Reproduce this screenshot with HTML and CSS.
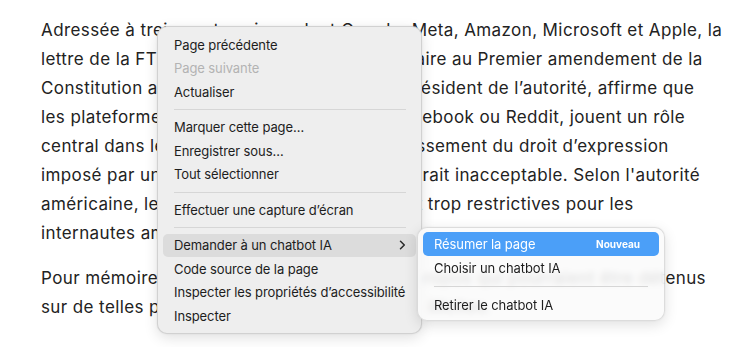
FILE: index.html
```html
<!DOCTYPE html>
<html lang="fr">
<head>
<meta charset="utf-8">
<title>Menu contextuel</title>
<link rel="stylesheet" href="styles.css">
</head>
<body>
<main class="article">
  <p class="para">Adressée à treize entreprises, dont Google, Meta, Amazon, Microsoft et Apple, la<br>lettre de la FTC juge sa réglementation contraire au Premier amendement de la<br>Constitution américaine. Andrew Ferguson président de l’autorité, affirme que<br>les plateformes numériques, à l’image de Facebook ou Reddit, jouent un rôle<br>central dans le discours public et que l’établissement du droit d’expression<br>imposé par une puissance étrangère alliée serait inacceptable. Selon l'autorité<br>américaine, les règles européennes semblent trop restrictives pour les<br>internautes américains.</p>
  <p class="para">Pour mémoire, le DSA impose de retirer ces propos qui pourraient être détenus<br>sur de telles plateformes lorsqu’ils sont jugés illicites.</p>
</main>

<nav class="menu main-menu">
  <div class="item">Page précédente</div>
  <div class="item disabled">Page suivante</div>
  <div class="item">Actualiser</div>
  <div class="sep"></div>
  <div class="item">Marquer cette page…</div>
  <div class="item">Enregistrer sous…</div>
  <div class="item">Tout sélectionner</div>
  <div class="sep"></div>
  <div class="item">Effectuer une capture d’écran</div>
  <div class="sep"></div>
  <div class="item open">
    <span>Demander à un chatbot IA</span>
    <svg class="chev" width="7" height="10" viewBox="0 0 7 10"><path d="M1.5 1.2 L5.3 5 L1.5 8.8" fill="none" stroke="#2a2a2a" stroke-width="1.5" stroke-linecap="round" stroke-linejoin="round"/></svg>
  </div>
  <div class="item">Code source de la page</div>
  <div class="item">Inspecter les propriétés d’accessibilité</div>
  <div class="item">Inspecter</div>
</nav>

<nav class="menu sub-menu">
  <div class="item active"><span>Résumer la page</span><span class="badge">Nouveau</span></div>
  <div class="item">Choisir un chatbot IA</div>
  <div class="sep"></div>
  <div class="item">Retirer le chatbot IA</div>
</nav>
</body>
</html>
```
FILE: styles.css
```css
html, body {
  margin: 0;
  padding: 0;
  background: #ffffff;
}
body {
  width: 743px;
  height: 347px;
  overflow: hidden;
  position: relative;
  font-family: Inter, "Noto Sans", sans-serif;
}
.article {
  padding: 16px 0 0 41px;
}
.para {
  margin: 0 0 16px 0;
  font-size: 17px;
  line-height: 29px;
  letter-spacing: 0.4px;
  color: #222222;
  white-space: nowrap;
}
.menu {
  position: absolute;
  box-sizing: border-box;
  font-family: Inter, "Noto Sans", sans-serif;
  font-size: 13px;
  letter-spacing: -0.1px;
  color: #1d1d1d;
  border-radius: 10px;
  border: 1px solid rgba(0, 0, 0, 0.12);
  box-shadow: 0 4px 14px rgba(0, 0, 0, 0.12), 0 0 2px rgba(0, 0, 0, 0.08);
}
.main-menu {
  left: 157px;
  top: 26px;
  width: 265px;
  padding: 6px 0 5px;
  background: #eeeeee;
}
.sub-menu {
  left: 417px;
  top: 227px;
  width: 248px;
  padding: 4px 0 3px;
  background: rgba(250, 250, 250, 0.86);
  backdrop-filter: blur(3px);
}
.item {
  height: 23.5px;
  margin: 0 5px;
  padding: 0 11px;
  border-radius: 5px;
  display: flex;
  align-items: center;
  justify-content: space-between;
  white-space: nowrap;
}
.sub-menu .item {
  height: 24px;
}
.disabled {
  color: #b3b3b3;
}
.open {
  background: #dcdcdc;
  padding-right: 10px;
}
.active {
  background: #4b9ff8;
  color: #ffffff;
  padding-right: 19px;
}
.badge {
  font-size: 10px;
  font-weight: 700;
  letter-spacing: 0;
}
.sep {
  height: 12px;
  margin: 0 15px 0 16px;
  display: flex;
  align-items: center;
}
.sep::before {
  content: "";
  display: block;
  width: 100%;
  height: 1px;
  background: #d6d6d6;
}
.sub-menu .sep {
  height: 13px;
  margin: 0 16px 0 16px;
}
.chev {
  display: block;
}
```
